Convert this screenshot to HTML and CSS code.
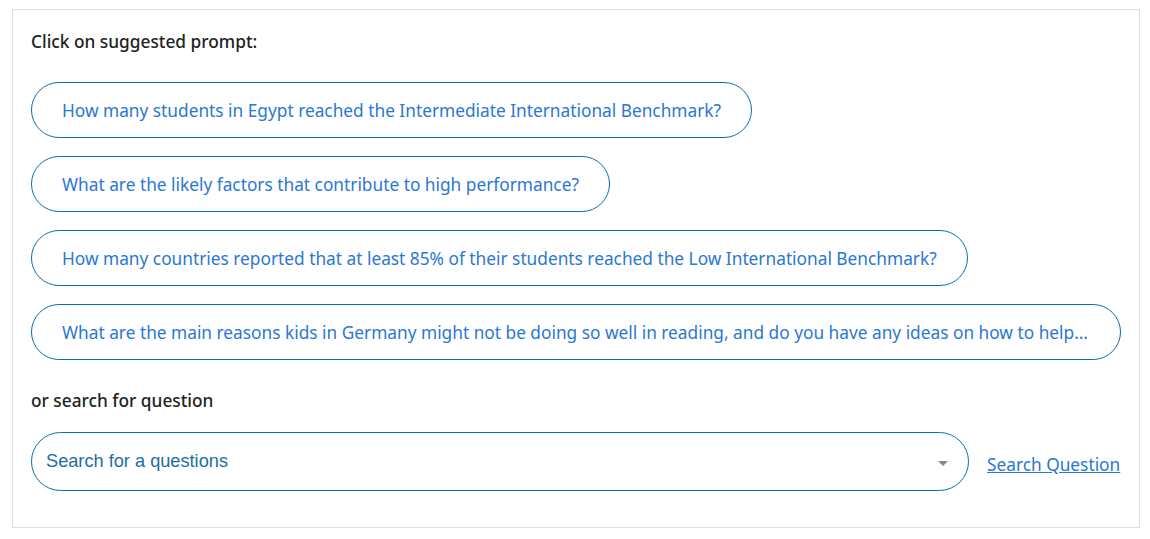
FILE: index.html
```html
<!DOCTYPE html>
<html lang="en">
<head>
<meta charset="utf-8">
<title>Suggested prompts</title>
<link rel="stylesheet" href="styles.css">
</head>
<body>
<section class="panel">
  <h2 class="label">Click on suggested prompt:</h2>
  <div class="prompts">
    <button class="prompt">How many students in Egypt reached the Intermediate International Benchmark?</button>
    <button class="prompt">What are the likely factors that contribute to high performance?</button>
    <button class="prompt">How many countries reported that at least 85% of their students reached the Low International Benchmark?</button>
    <button class="prompt">What are the main reasons kids in Germany might not be doing so well in reading, and do you have any ideas on how to help them improve their reading skills?</button>
  </div>
  <h2 class="label label-search">or search for question</h2>
  <div class="search-row">
    <div class="search-box">
      <span class="placeholder">Search for a questions</span>
      <span class="caret"></span>
    </div>
    <a class="search-link" href="#">Search Question</a>
  </div>
</section>
</body>
</html>
```

FILE: styles.css
```css
* { box-sizing: border-box; }
html, body { margin: 0; padding: 0; background: #fff; }
body {
  padding: 9px 10px 11px 12px;
  font-family: "Noto Sans", "Open Sans", sans-serif;
}
.panel {
  border: 1px solid #dedede;
  padding: 20px 18px 36px 18px;
  height: 519px;
}
.label {
  margin: 0;
  font-size: 17.3px;
  font-weight: 500;
  color: #222;
  line-height: 24px;
}
.prompts {
  display: flex;
  flex-direction: column;
  align-items: flex-start;
  gap: 18px;
  margin-top: 28px;
}
.prompt {
  max-width: 100%;
  height: 56px;
  padding: 0 30px;
  border: 1px solid #0c6cb0;
  border-radius: 28px;
  background: #fff;
  color: #2a77d4;
  font-family: inherit;
  font-size: 17.3px;
  text-align: left;
  white-space: nowrap;
  overflow: hidden;
  text-overflow: ellipsis;
  cursor: pointer;
}
.prompt:last-child { width: 100%; }
.label-search { margin-top: 29px; }
.search-row {
  display: flex;
  align-items: center;
  gap: 18px;
  margin-top: 19px;
}
.search-box {
  flex: 0 0 938px;
  height: 59px;
  border: 1px solid #0c6cb0;
  border-radius: 30px;
  display: flex;
  align-items: center;
  justify-content: space-between;
  padding: 0 20px 0 14px;
}
.placeholder {
  font-family: "Liberation Sans", Arial, sans-serif;
  font-size: 18.2px;
  color: #1b6ea6;
}
.caret {
  width: 0;
  height: 0;
  border-left: 5px solid transparent;
  border-right: 5px solid transparent;
  border-top: 5px solid #888;
  margin-top: 3px;
}
.search-link {
  color: #2a77d4;
  font-size: 17.3px;
  text-decoration: underline;
  margin-top: 5px;
}
```
